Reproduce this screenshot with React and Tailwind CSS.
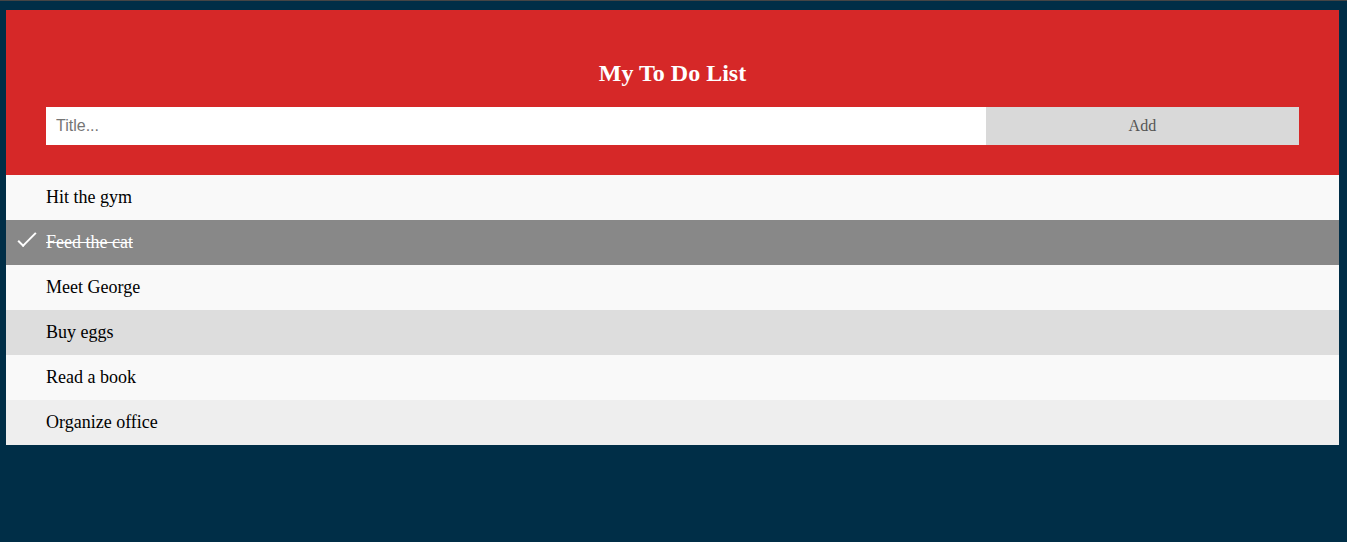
import React, { useState } from 'react';

const initialTodos = [
    { id: 1, title: 'Hit the gym', checked: false },
    { id: 2, title: 'Feed the cat', checked: true },
    { id: 3, title: 'Meet George', checked: false },
    { id: 4, title: 'Buy eggs', checked: false },
    { id: 5, title: 'Read a book', checked: false },
    { id: 6, title: 'Organize office', checked: false },
];

const App = () => {
    const [todos, setTodos] = useState(initialTodos);
    const [title, setTitle] = useState('');

    const addTodo = () => {
        if (!title.trim()) return;
        setTodos([...todos, { id: Date.now(), title, checked: false }]);
        setTitle('');
    };

    const toggle = (id) => {
        setTodos(todos.map((t) => (t.id === id ? { ...t, checked: !t.checked } : t)));
    };

    const rowBg = (todo, index) => {
        if (todo.checked) return 'bg-[#888888] text-white line-through';
        if (index === 3) return 'bg-[#dddddd] text-black';
        return index % 2 === 0 ? 'bg-[#f9f9f9] text-black' : 'bg-[#eeeeee] text-black';
    };

    return (
        <div className="min-h-screen bg-[#002e47] font-['Liberation_Serif',serif]">
            <div className="h-px bg-[#454545]" />
            <div className="pt-[9px] pl-[6px] pr-[8px]">
                <div className="bg-[#d62828] px-10 pt-[30px] pb-[30px] text-center">
                    <h2 className="m-0 pt-[20px] pb-[20px] text-[24px] leading-[27px] font-bold text-white">
                        My To Do List
                    </h2>
                    <div className="flex">
                        <input
                            type="text"
                            value={title}
                            onChange={(e) => setTitle(e.target.value)}
                            placeholder="Title..."
                            className="w-3/4 h-[38px] px-[10px] bg-white text-[16px] font-['Liberation_Sans',sans-serif] text-black placeholder:text-[#757575] outline-none"
                        />
                        <button
                            onClick={addTodo}
                            className="w-1/4 h-[38px] bg-[#d9d9d9] text-[#555555] text-[16px] font-['Liberation_Serif',serif]"
                        >
                            Add
                        </button>
                    </div>
                </div>
                <ul className="m-0 p-0">
                    {todos.map((todo, index) => (
                        <li
                            key={todo.id}
                            onClick={() => toggle(todo.id)}
                            className={`relative h-[45px] pl-10 pr-2 py-3 text-[18px] leading-[21px] cursor-pointer ${rowBg(todo, index)}`}
                        >
                            {todo.checked && (
                                <span className="absolute left-[17px] top-[8px] w-[8px] h-[19px] border-r-2 border-b-2 border-white rotate-45" />
                            )}
                            {todo.title}
                        </li>
                    ))}
                </ul>
            </div>
        </div>
    );
};

export default App;
